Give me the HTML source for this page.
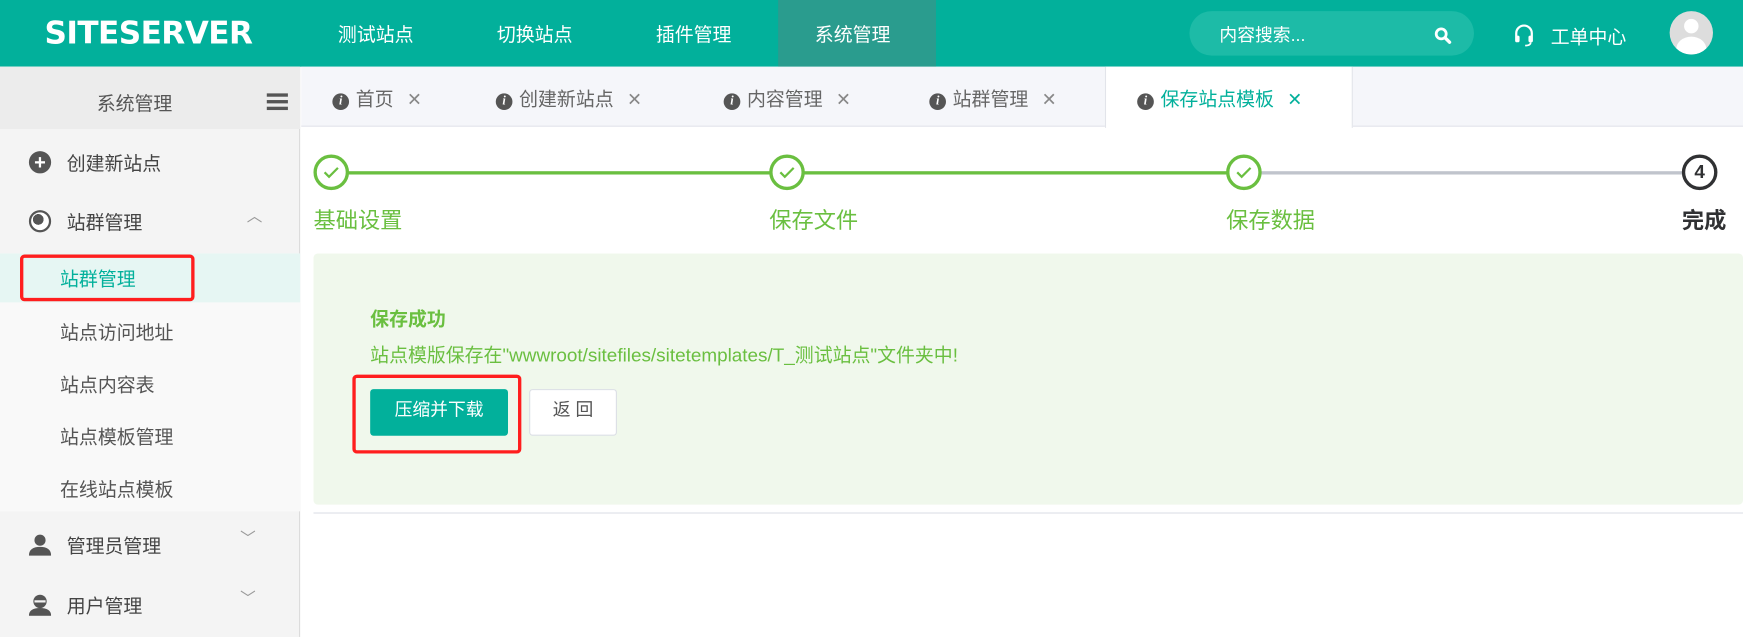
<!DOCTYPE html>
<html><head><meta charset="utf-8"><style>
*{margin:0;padding:0;box-sizing:border-box}
html,body{width:1743px;height:637px;overflow:hidden;background:#fff}
#w{width:1568px;height:573px;transform:scale(1.11161);transform-origin:0 0;position:relative;font-family:"Liberation Sans","Noto Sans CJK SC",sans-serif}
.a{position:absolute;white-space:nowrap}
.top{left:0;top:0;width:1568px;height:60px;background:#02b09b}
.nav{color:#fff;font-size:17px;top:17px}
.side{left:0;top:60px;width:270px;height:513px;background:#f4f4f4;border-right:1px solid #dcdcdc}
.mi{font-size:17px;color:#444}
.si{font-size:17px;color:#555;left:54px}
.tab{font-size:17px;color:#666;top:75px}
.ic{display:inline-block;width:15px;height:15px;border-radius:50%;background:#555;color:#fff;font:italic bold 11px "Liberation Serif",serif;text-align:center;line-height:15px;vertical-align:1px;margin-right:6px}
.x{color:#888;margin-left:12px;font-size:16px}
.c{width:32px;height:32px;border-radius:50%;border:3px solid #6abf40;background:#fff;top:139px}
.lb{font-size:20px;color:#6abf40;top:182px}
</style></head><body><div id="w">
<div class="a top"></div>
<div class="a" style="left:40px;top:13px;color:#fff;font:bold 28px 'DejaVu Sans',sans-serif;letter-spacing:-0.5px">SITESERVER</div>
<div class="a" style="left:700px;top:0;width:142px;height:60px;background:#2a9c8e"></div>
<div class="a nav" style="left:304px">测试站点</div>
<div class="a nav" style="left:447px">切换站点</div>
<div class="a nav" style="left:590px">插件管理</div>
<div class="a nav" style="left:733px">系统管理</div>
<div class="a" style="left:1070px;top:10px;width:256px;height:40px;border-radius:20px;background:#1dbba7"></div>
<div class="a" style="left:1097px;top:18px;color:#fff;font-size:16px">内容搜索...</div>
<svg class="a" style="left:1290px;top:24px" width="16" height="16" viewBox="0 0 16 16"><circle cx="6.5" cy="6.5" r="4.5" fill="none" stroke="#fff" stroke-width="2.5"/><path d="M10 10l4 4" stroke="#fff" stroke-width="3" stroke-linecap="round"/></svg>
<svg class="a" style="left:1361px;top:21px" width="20" height="22" viewBox="0 0 20 22"><path d="M3 12V9a7 7 0 0 1 14 0v3" fill="none" stroke="#fff" stroke-width="2"/><rect x="2" y="11" width="4" height="6" rx="1.5" fill="#fff"/><rect x="14" y="11" width="4" height="6" rx="1.5" fill="#fff"/><path d="M16 17q0 3-5 3" fill="none" stroke="#fff" stroke-width="1.5"/></svg>
<div class="a" style="left:1395px;top:19px;color:#fff;font-size:17px">工单中心</div>
<div class="a" style="left:1502px;top:10px;width:39px;height:39px;border-radius:50%;background:#ddd;overflow:hidden"><div style="position:absolute;left:13px;top:7px;width:13px;height:13px;border-radius:50%;background:#fff"></div><div style="position:absolute;left:6px;top:23px;width:27px;height:22px;border-radius:50%;background:#fff"></div></div>

<div class="a side"></div>
<div class="a" style="left:0;top:60px;width:270px;height:56px;background:#ececec"></div>
<div class="a" style="left:87px;top:79px;font-size:17px;color:#555">系统管理</div>
<div class="a" style="left:240px;top:84px;width:19px;height:3px;background:#555;box-shadow:0 6px 0 #555,0 12px 0 #555"></div>
<div class="a" style="left:26px;top:136px;width:20px;height:20px;border-radius:50%;background:#555;color:#fff;text-align:center;font:bold 18px/20px sans-serif">+</div>
<div class="a mi" style="left:60px;top:133px">创建新站点</div>
<div class="a" style="left:26px;top:189px;width:20px;height:20px;border-radius:50%;border:2px solid #555;background:radial-gradient(circle at 40% 40%,#555 35%,#fff 36%)"></div>
<div class="a mi" style="left:60px;top:186px">站群管理</div>
<div class="a" style="left:222px;top:184px;color:#999;font-size:14px">︿</div>
<div class="a" style="left:0;top:228px;width:270px;height:232px;background:#f9f9f9"></div>
<div class="a" style="left:0;top:228px;width:270px;height:44px;background:#e6f6f3"></div>
<div class="a si" style="top:237px;color:#02b09b">站群管理</div>
<div class="a" style="left:18px;top:229px;width:157px;height:42px;border:3px solid #ff1e1e;border-radius:4px"></div>
<div class="a si" style="top:285px">站点访问地址</div>
<div class="a si" style="top:332px">站点内容表</div>
<div class="a si" style="top:379px">站点模板管理</div>
<div class="a si" style="top:426px">在线站点模板</div>
<svg class="a" style="left:26px;top:480px" width="20" height="20" viewBox="0 0 20 20"><circle cx="10" cy="6" r="5" fill="#555"/><path d="M0 20q0-8 10-8t10 8z" fill="#555"/></svg>
<div class="a mi" style="left:60px;top:477px">管理员管理</div>
<div class="a" style="left:216px;top:474px;color:#999;font-size:14px">﹀</div>
<svg class="a" style="left:26px;top:534px" width="20" height="20" viewBox="0 0 20 20"><circle cx="10" cy="7" r="6" fill="#555"/><rect x="5" y="6" width="10" height="2" fill="#f4f4f4"/><path d="M0 20q0-7 10-7t10 7z" fill="#555"/></svg>
<div class="a mi" style="left:60px;top:531px">用户管理</div>
<div class="a" style="left:216px;top:528px;color:#999;font-size:14px">﹀</div>

<div class="a" style="left:271px;top:60px;width:1297px;height:54px;background:#f5f6fa;border-bottom:1px solid #e2e4ea"></div>
<div class="a" style="left:994px;top:60px;width:223px;height:55px;background:#fff;border-left:1px solid #e2e4ea;border-right:1px solid #e2e4ea"></div>
<div class="a tab" style="left:299px"><span class="ic">i</span>首页<span class="x">✕</span></div>
<div class="a tab" style="left:446px"><span class="ic">i</span>创建新站点<span class="x">✕</span></div>
<div class="a tab" style="left:651px"><span class="ic">i</span>内容管理<span class="x">✕</span></div>
<div class="a tab" style="left:836px"><span class="ic">i</span>站群管理<span class="x">✕</span></div>
<div class="a tab" style="left:1023px;color:#02b09b"><span class="ic">i</span>保存站点模板<span class="x" style="color:#02b09b">✕</span></div>

<div class="a" style="left:298px;top:154px;width:821px;height:3px;background:#6abf40"></div>
<div class="a" style="left:1119px;top:154px;width:410px;height:3px;background:#c0c4cc"></div>
<div class="a c" style="left:282px"><svg width="26" height="26" viewBox="0 0 26 26"><path d="M7 13l4 4 8-8" fill="none" stroke="#6abf40" stroke-width="2"/></svg></div>
<div class="a c" style="left:692px"><svg width="26" height="26" viewBox="0 0 26 26"><path d="M7 13l4 4 8-8" fill="none" stroke="#6abf40" stroke-width="2"/></svg></div>
<div class="a c" style="left:1103px"><svg width="26" height="26" viewBox="0 0 26 26"><path d="M7 13l4 4 8-8" fill="none" stroke="#6abf40" stroke-width="2"/></svg></div>
<div class="a c" style="left:1513px;border-color:#303133;text-align:center;font:bold 17px/26px 'Liberation Sans',sans-serif;color:#303133">4</div>
<div class="a lb" style="left:282px">基础设置</div>
<div class="a lb" style="left:692px">保存文件</div>
<div class="a lb" style="left:1103px">保存数据</div>
<div class="a lb" style="left:1513px;color:#303133;font-weight:bold">完成</div>

<div class="a" style="left:282px;top:228px;width:1286px;height:226px;background:#f0f8ec;border-radius:4px"></div>
<div class="a" style="left:282px;top:461px;width:1286px;height:1px;background:#dcdfe6"></div>
<div class="a" style="left:333px;top:273px;font-size:17px;font-weight:bold;color:#6abf40">保存成功</div>
<div class="a" style="left:333px;top:305px;font-size:17px;color:#6abf40">站点模版保存在"wwwroot/sitefiles/sitetemplates/T_测试站点"文件夹中!</div>
<div class="a" style="left:333px;top:350px;width:124px;height:42px;background:#02b09b;border-radius:3px;color:#fff;font-size:16px;text-align:center;line-height:40px">压缩并下载</div>
<div class="a" style="left:476px;top:350px;width:79px;height:42px;background:#fff;border:1px solid #dcdfe6;border-radius:3px;color:#555;font-size:16px;text-align:center;line-height:38px">返 回</div>
<div class="a" style="left:317px;top:337px;width:152px;height:71px;border:3px solid #ff1e1e;border-radius:4px"></div>
</div></body></html>
